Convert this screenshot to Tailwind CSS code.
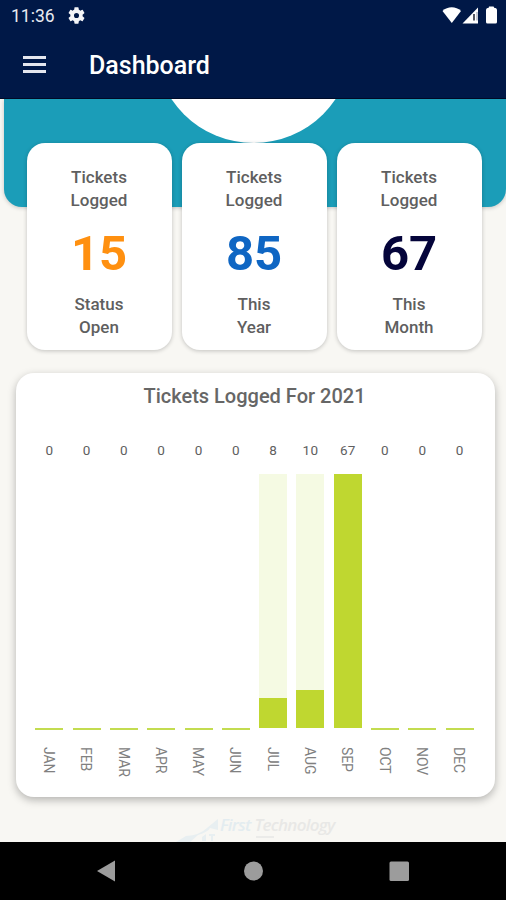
<!DOCTYPE html>
<html lang="en">
<head>
    <meta charset="UTF-8">
    <meta name="viewport" content="width=device-width, initial-scale=1.0">
    <title>Dashboard</title>
    <script src="https://cdn.jsdelivr.net/npm/@tailwindcss/browser@4"></script>
</head>
<body class="bg-[#f8f7f3] font-[Roboto,sans-serif]">
    <div class="w-[506px] h-[900px] flex flex-col overflow-hidden">

        <!-- Status bar and title -->
        <header class="h-[99px] shrink-0 bg-[#001847] border-b border-[#000a26] text-white">
            <div class="h-8 flex items-center pl-[11px] pr-[8px]">
                <span class="text-[17.5px] leading-8 text-[#e9ebf2] w-[57px]">11:36</span>
                <svg class="size-[17px] -mt-0.5" viewBox="2 2 20 20" fill="#f4f5f8"><path d="M19.14 12.94c.04-.3.06-.61.06-.94 0-.32-.02-.64-.07-.94l2.03-1.58a.49.49 0 0 0 .12-.61l-1.92-3.32a.49.49 0 0 0-.59-.22l-2.39.96c-.5-.38-1.03-.7-1.62-.94l-.36-2.54a.48.48 0 0 0-.48-.41h-3.84c-.24 0-.43.17-.47.41l-.36 2.54c-.59.24-1.13.57-1.62.94l-2.39-.96a.48.48 0 0 0-.59.22L2.74 8.87c-.12.21-.08.47.12.61l2.03 1.58c-.05.3-.09.63-.09.94s.02.64.07.94l-2.03 1.58a.49.49 0 0 0-.12.61l1.92 3.32c.12.22.37.29.59.22l2.39-.96c.5.38 1.03.7 1.62.94l.36 2.54c.05.24.24.41.48.41h3.84c.24 0 .44-.17.47-.41l.36-2.54c.59-.24 1.13-.56 1.62-.94l2.39.96c.22.08.47 0 .59-.22l1.92-3.32a.48.48 0 0 0-.12-.61zM12 15a3 3 0 1 1 0-6 3 3 0 0 1 0 6z"/></svg>
                <svg class="w-[56px] h-[18px] ml-auto -mt-0.5" viewBox="0 0 56 18" fill="#fff">
                    <path d="M0.500 5C5.500 0 14 0 19 5L9.800 17z"/>
                    <path d="M36 1.500V17.500H20.500z"/>
                    <path d="M32 8v6.500" stroke="#2b2f3d" stroke-width="1.600"/>
                    <path d="M35 6v8.500" stroke="#8b93a8" stroke-width="1"/>
                    <path d="M47 0.500h4.500l1 1.500h1q1.500 .5 1.500 2V16q0 1.500-1.500 1.500h-8q-1.500 0-1.500-1.500V4q0-1.500 1.500-2h1z"/>
                </svg>
            </div>
            <div class="h-[66px] flex items-center pl-[23px]">
                <div class="flex flex-col gap-[4px] w-[66px] -mt-[2px]">
                    <div class="w-[23px] h-[3px] bg-[#e4e6ee]"></div>
                    <div class="w-[23px] h-[3px] bg-[#e4e6ee]"></div>
                    <div class="w-[23px] h-[3px] bg-[#e4e6ee]"></div>
                </div>
                <h1 class="text-[25px] font-medium pt-[2px]">Dashboard</h1>
            </div>
        </header>

        <main class="relative h-[743px] shrink-0 overflow-hidden pt-[44px]">
            <!-- Banner behind the cards -->
            <div class="absolute top-0 left-[4px] w-[502px] h-[107.500px] bg-[#1b9db8] rounded-b-[18px] shadow-[0_1px_4px_rgba(0,0,0,0.2)]"></div>
            <div class="absolute -top-[153.500px] left-[154.500px] size-[197px] rounded-full bg-white"></div>

            <!-- Ticket counts -->
            <div class="relative flex gap-[10px] pl-[27px]">
                <div class="w-[145px] h-[207px] rounded-[18px] bg-white shadow-[0_1px_4px_rgba(0,0,0,0.22)] text-center text-[#5f5f5f] text-[17px] leading-[23px] font-medium pt-[23px] pr-[1px]">
                    <p>Tickets<br>Logged</p>
                    <p class="text-[49px] leading-[58px] font-bold text-[#ff9010] pt-[12.500px] pb-[10.500px]">15</p>
                    <p>Status<br>Open</p>
                </div>
                <div class="w-[145px] h-[207px] rounded-[18px] bg-white shadow-[0_1px_4px_rgba(0,0,0,0.22)] text-center text-[#5f5f5f] text-[17px] leading-[23px] font-medium pt-[23px] pr-[1px]">
                    <p>Tickets<br>Logged</p>
                    <p class="text-[49px] leading-[58px] font-bold text-[#0f66c3] pt-[12.500px] pb-[10.500px]">85</p>
                    <p>This<br>Year</p>
                </div>
                <div class="w-[145px] h-[207px] rounded-[18px] bg-white shadow-[0_1px_4px_rgba(0,0,0,0.22)] text-center text-[#5f5f5f] text-[17px] leading-[23px] font-medium pt-[23px] pr-[1px]">
                    <p>Tickets<br>Logged</p>
                    <p class="text-[49px] leading-[58px] font-bold text-[#04043a] pt-[12.500px] pb-[10.500px]">67</p>
                    <p>This<br>Month</p>
                </div>
            </div>

            <!-- Chart -->
            <div class="relative mt-[23px] ml-[16px] w-[479px] h-[424px] rounded-[18px] bg-white shadow-[0_3px_8px_rgba(0,0,0,0.28)] pt-[10px]">
                <h2 class="text-center text-[20px] leading-[26px] font-medium pr-[2px] text-[#666]">Tickets Logged For 2021</h2>
                <div id="chart" class="mt-[33px] ml-[14.800px] w-[447.500px] grid grid-cols-12"></div>
            </div>

            <!-- Watermark logo -->
            <div class="flex pl-[176px] mt-[17px] font-['Open_Sans',sans-serif]">
                <svg class="w-[44px] h-[28px]" viewBox="0 0 44 28" fill="#e8eff1">
                    <path d="M31 14L42 5V16L34 14Q32 18 22 21L14 28H0L10 22Q24 21 31 14z"/>
                    <path d="M26 23l4-3v7h-4zM33 20h6v2h-2v5h-2v-5h-2z"/>
                </svg>
                <div>
                    <p class="text-[17px] leading-[22px] italic font-semibold tracking-[-0.7px] text-[#e8e8e6]"><span class="text-[#e3ecf0]">First</span> Technology</p>
                    <div class="ml-[36px] w-[18px] h-[2px] bg-[#ebebe9]"></div>
                </div>
            </div>
        </main>

        <!-- Navigation bar -->
        <nav class="h-[58px] shrink-0 bg-black flex items-center pl-[97px]">
            <svg class="w-[312px] h-[22px]" viewBox="0 0 312 22" fill="#9c9c9c">
                <path d="M0 11L18 0.500V21.500z" />
                <circle cx="156.500" cy="11" r="9.500" />
                <rect x="292.500" y="1.500" width="19.500" height="19.500" rx="1.500" />
            </svg>
        </nav>
    </div>

    <script>
        // fill is the bar height in px, the full track is 254px
        const months = [
            { name: 'JAN', count: 0, fill: 0 },
            { name: 'FEB', count: 0, fill: 0 },
            { name: 'MAR', count: 0, fill: 0 },
            { name: 'APR', count: 0, fill: 0 },
            { name: 'MAY', count: 0, fill: 0 },
            { name: 'JUN', count: 0, fill: 0 },
            { name: 'JUL', count: 8, fill: 30.5 },
            { name: 'AUG', count: 10, fill: 38 },
            { name: 'SEP', count: 67, fill: 254 },
            { name: 'OCT', count: 0, fill: 0 },
            { name: 'NOV', count: 0, fill: 0 },
            { name: 'DEC', count: 0, fill: 0 }
        ];

        const chart = document.getElementById('chart');
        months.forEach(month => {
            const track = month.count ? 'bg-[#f5fae3]' : '';
            const line = month.count ? '' : 'bg-[#c3dc50]';
            chart.innerHTML += `<div class="flex flex-col items-center">
                <span class="text-[13.500px] leading-[16px] tracking-[0.3px] text-[#606060]">${month.count}</span>
                <div class="mt-[16px] w-[28px] h-[254px] flex flex-col justify-end ${track}">
                    <div class="bg-[#bfd730]" style="height: ${month.fill}px"></div>
                </div>
                <div class="w-[28px] h-[2px] ${line}"></div>
                <span class="mt-[17px] mr-[1px] text-[14px] leading-[16px] tracking-[-0.1px] text-[#808080] [writing-mode:vertical-rl]">${month.name}</span>
            </div>`;
        });
    </script>
</body>
</html>
